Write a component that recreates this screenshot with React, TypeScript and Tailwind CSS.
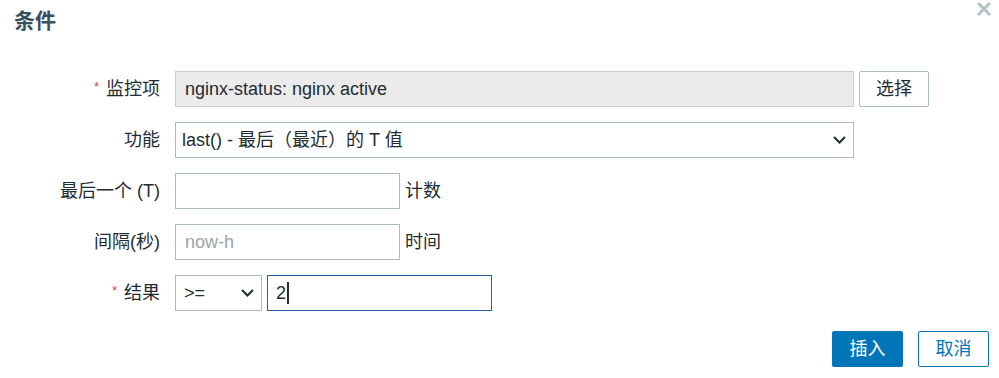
import React from "react"

const font = { fontFamily: '"Liberation Sans", "Noto Sans CJK SC", sans-serif' }

const Chevron = ({ className = "" }: { className?: string }) => (
  <svg width="13" height="8" viewBox="0 0 13 8" className={className}>
    <path d="M1 1l5.5 5.5L12 1" fill="none" stroke="#1f2c33" strokeWidth="2" />
  </svg>
)

const Label = ({ text, required }: { text: string; required?: boolean }) => (
  <div className="flex h-[36px] items-center justify-end text-[18px] text-[#1f2c33]">
    {required && <span className="mr-[7px] -mt-[4px] text-[13px] text-[#e54251]">*</span>}
    {text}
  </div>
)

const App: React.FC = () => {
  return (
    <div className="relative h-[378px] w-[999px] bg-white" style={font}>
      <div className="flex h-[71px] items-start justify-between">
        <h1 className="pl-[14px] pt-[8px] text-[21px] font-bold leading-[26px] text-[#37505e]">条件</h1>
        <button className="mr-[7px] mt-[1px] text-[#b4c0c7]">
          <svg width="16" height="16" viewBox="0 0 16 16">
            <path d="M2 2l12 12M14 2L2 14" stroke="currentColor" strokeWidth="3" />
          </svg>
        </button>
      </div>

      <div className="grid grid-cols-[160px_1fr] gap-x-[15px] gap-y-[15px]">
        <Label text="监控项" required />
        <div className="flex gap-[5px]">
          <div className="flex h-[36px] w-[679px] items-center border border-[#c5cdd1] bg-[#ebebeb] pl-[9px] text-[18px] text-[#1f2c33]">
            nginx-status: nginx active
          </div>
          <button className="h-[36px] w-[70px] rounded-[2px] border border-[#acbbc2] bg-white text-[18px] text-[#1f2c33]">
            选择
          </button>
        </div>

        <Label text="功能" />
        <div className="flex h-[36px] w-[679px] items-center justify-between border border-[#acbbc2] bg-white pl-[6px] pr-[7px] text-[18px] text-[#1f2c33]">
          <span>last() - 最后（最近）的 T 值</span>
          <Chevron />
        </div>

        <Label text="最后一个 (T)" />
        <div className="flex items-center gap-[5px] text-[18px] text-[#1f2c33]">
          <div className="h-[36px] w-[225px] border border-[#acbbc2] bg-white" />
          <span>计数</span>
        </div>

        <Label text="间隔(秒)" />
        <div className="flex items-center gap-[5px] text-[18px] text-[#1f2c33]">
          <div className="flex h-[36px] w-[225px] items-center border border-[#acbbc2] bg-white pl-[9px] text-[#9aa4a9]">
            now-h
          </div>
          <span>时间</span>
        </div>

        <Label text="结果" required />
        <div className="flex items-center gap-[5px] text-[18px] text-[#1f2c33]">
          <div className="flex h-[36px] w-[87px] items-center justify-between border border-[#acbbc2] bg-white pl-[8px] pr-[7px]">
            <span>&gt;=</span>
            <Chevron />
          </div>
          <div className="flex h-[36px] w-[225px] items-center border border-[#1f65a6] bg-white pl-[8px]">
            <span>2</span>
            <span className="ml-[1px] h-[22px] w-[2px] bg-[#1f2c33]" />
          </div>
        </div>
      </div>

      <div className="mt-[20px] flex justify-end gap-[15px] pr-[10px]">
        <button className="h-[36px] w-[71px] rounded-[2px] bg-[#0275b8] text-[18px] text-white">插入</button>
        <button className="h-[36px] w-[71px] rounded-[2px] border border-[#0275b8] bg-white text-[18px] text-[#0275b8]">
          取消
        </button>
      </div>
    </div>
  )
}

export default App
